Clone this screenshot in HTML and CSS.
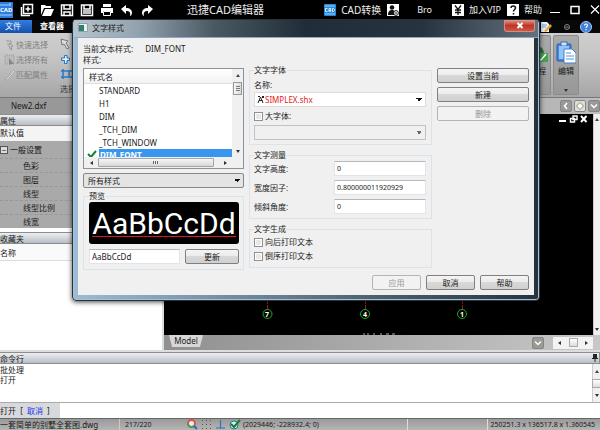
FILE: index.html
```html
<!DOCTYPE html>
<html lang="zh-CN">
<head>
<meta charset="utf-8">
<title>迅捷CAD编辑器</title>
<link rel="stylesheet" href="styles.css">
</head>
<body>
<div class="app">
  <header class="titlebar">
    <svg class="logo" width="13" height="18" viewBox="0 0 13 18"><rect width="13" height="16" y="1" fill="#2b7de0"/><path d="M0 4h9M0 14h12" stroke="#a9d0ff"/><path d="M10 2v3" stroke="#d8eaff"/></svg>
    <span class="logo-text">CAD</span>
    <div class="quick">
      <button aria-label="新建文件"><svg width="14" height="14" viewBox="0 0 14 14"><path d="M3.500 1.500h9v9h-9z" fill="none" stroke="#fff" stroke-width="1.500"/><path d="M1.500 4v8.500H10M8 3.500v5M5.500 6h5" fill="none" stroke="#fff" stroke-width="1.500"/></svg></button>
      <button aria-label="打开"><svg width="14" height="14" viewBox="0 0 14 14"><path d="M1 12V2h4l1 1h5v2H4z" fill="#fff"/><path d="M5 6h9l-3 7H2z" fill="#fff"/></svg></button>
      <button aria-label="保存"><svg width="14" height="14" viewBox="0 0 14 14"><path d="M1.500 2h11v10.500h-11z" fill="none" stroke="#fff" stroke-width="1.500"/><path d="M4 2v4h6V2M4 12V9h6v3" fill="none" stroke="#fff" stroke-width="1.500"/></svg></button>
      <button aria-label="另存为"><svg width="14" height="14" viewBox="0 0 14 14"><path d="M1.500 2h11v10.500h-11z" fill="none" stroke="#fff" stroke-width="1.500"/><path d="M4 2v4h6V2M3 8h8M3 10h8" fill="none" stroke="#fff" stroke-width="1.500"/></svg></button>
      <button aria-label="打印"><svg width="14" height="14" viewBox="0 0 14 14"><path d="M3 1h8v3H3zM1 5h12v5h-2V8H3v2H1z" fill="#fff"/><path d="M3.500 8.500h7v4h-7z" fill="none" stroke="#fff"/></svg></button>
      <button aria-label="撤销"><svg width="14" height="14" viewBox="0 0 14 14"><path d="M1 6l5-4v3c4 0 6 2 6 5 0 1-1 3-2 3 1-4-1-5-4-5v3z" fill="#fff"/></svg></button>
      <button aria-label="重做"><svg width="14" height="14" viewBox="0 0 14 14"><path d="M13 6L8 2v3c-4 0-6 2-6 5 0 1 1 3 2 3-1-4 1-5 4-5v3z" fill="#fff"/></svg></button>
    </div>
    <h1>迅捷CAD编辑器</h1>
    <div class="account">
      <svg width="12" height="12" viewBox="0 0 12 12"><rect width="12" height="12" rx="1" fill="#2788dc"/><path d="M1 2h10M1 10h10" stroke="#9bd0ff"/><path d="M3.500 4.500H1.500v3h2M5 8V4.500h1.700V8M5 6.500h1.500M8.500 4.500v3h1l1-1v-1l-1-1z" fill="none" stroke="#fff" stroke-width=".8"/></svg>
      <span class="convert">CAD转换</span>
      <svg width="12" height="12" viewBox="0 0 12 12"><rect width="12" height="12" fill="#fff"/><circle cx="5" cy="3.500" r="2.300" fill="#111"/><path d="M1 11c0-4 2-5 4-5s3 1 3 5z" fill="#111"/><circle cx="9" cy="9" r="2.400" fill="#fff" stroke="#111"/><path d="M8 9h2" stroke="#111"/></svg>
      <span class="user">Bro</span>
      <svg width="12" height="12" viewBox="0 0 12 12"><rect width="12" height="12" fill="#fff"/><path d="M3 1.500l3 4 3-4M6 5.500V11M3 6h6M3 8.500h6" fill="none" stroke="#111" stroke-width="1.300"/></svg>
      <span class="vip">加入VIP</span>
      <svg width="12" height="12" viewBox="0 0 12 12"><rect width="12" height="12" fill="#fff"/><path d="M4 4c0-3 4.500-2.500 4.500 0C8.500 5.500 6.500 5.500 6.500 7.500M6.500 9v1.500" fill="none" stroke="#111" stroke-width="1.500"/></svg>
      <span>帮助</span>
    </div>
    <div class="window-buttons">
      <button aria-label="最小化"><svg width="10" height="12" viewBox="0 0 10 12"><path d="M0 8.500h10" stroke="#fff"/></svg></button>
      <button aria-label="最大化"><svg width="10" height="12" viewBox="0 0 10 12"><path d="M1 2.500h8v7H1z" fill="none" stroke="#fff" stroke-width="1.500"/></svg></button>
      <button aria-label="关闭"><svg width="10" height="12" viewBox="0 0 10 12"><path d="M1 1.500l8 8M9 1.500l-8 8" stroke="#fff" stroke-width="1.200"/></svg></button>
    </div>
  </header>

  <nav class="menubar">
    <a class="file" href="#">文件</a>
    <a class="viewer" href="#">查看器</a>
    <div class="menu-tools">
      <svg width="14" height="12" viewBox="0 0 14 12"><path d="M1 1h6l2 2v8H1z" fill="#eef4ff"/><path d="M2 4h5M2 6h4" stroke="#68a0dd"/><path d="M4 10l6-7 2 2-6 6z" fill="#e4a63a"/></svg>
      <svg width="8" height="8" viewBox="0 0 8 8"><circle cx="4" cy="4" r="2.500" fill="none" stroke="#888"/><path d="M2.500 5L4 3.500 5.500 5" fill="none" stroke="#999"/></svg>
      <svg width="12" height="12" viewBox="0 0 12 12"><circle cx="6" cy="6" r="5.500" fill="#3f7fdb" stroke="#a8cbf5"/><path d="M4.500 4.500c0-2 3-2 3 0C7.500 5.500 6 5.500 6 7M6 8v1.300" fill="none" stroke="#fff" stroke-width="1.200"/></svg>
    </div>
  </nav>

  <section class="ribbon">
    <div class="selection-tools">
      <ul>
        <li><svg width="12" height="12" viewBox="0 0 12 12"><path d="M2 2h5v3H3M5 4l4 3-2 1 1 3-2-1-1-4" fill="none" stroke="#999"/></svg>快速选择</li>
        <li><svg width="12" height="12" viewBox="0 0 12 12"><path d="M1 1h9v9H1z" fill="#bbb" stroke="#999" stroke-dasharray="1 1"/><path d="M5 4l5 6H7l-2 1z" fill="#888"/></svg>选择所有</li>
        <li><svg width="12" height="12" viewBox="0 0 12 12"><path d="M1 11l5-5 3-5 2 1-3 4-5 5z" fill="#ddd" stroke="#999" stroke-width=".7"/></svg>匹配属性</li>
      </ul>
      <div class="tool-column">
        <svg width="12" height="12" viewBox="0 0 12 12"><path d="M1 1l7 2-2 2 3 5-2 1-3-5-2 1z" fill="#ddd" stroke="#777"/></svg>
        <svg width="12" height="12" viewBox="0 0 12 12"><path d="M4.500 3v2h-3v2.500h3v3H7v-3h2.500V5H7V2.500H4.500z" fill="#dff0ff" stroke="#2474c6"/></svg>
        <svg width="12" height="12" viewBox="0 0 12 12"><path d="M3 1v10M1 3h11M1 9h11M9 3v6" stroke="#2878cc" stroke-width="1.500"/></svg>
        <span>选择</span>
      </div>
    </div>
    <div class="ribbon-actions">
      <button class="big-button"><svg width="20" height="24" viewBox="0 0 20 24"><circle cx="9" cy="12" r="7" fill="#356d47"/><path d="M6 12h14v9H6z" fill="#42a54c"/><path d="M10 17l3 2 5-6" stroke="#fff" fill="none" stroke-width="1.500"/></svg><span>过程</span></button>
      <button class="big-button edit"><svg width="20" height="24" viewBox="0 0 20 24"><rect x="1" y="3" width="14" height="17" rx="1" fill="#4689e0" stroke="#275fae"/><rect x="5" y="1" width="6" height="4" fill="#d3e3f5" stroke="#3a6db5"/><rect x="3" y="5" width="10" height="13" fill="#93c4fb"/><path d="M8 8h8l4 4v10H8z" fill="#fff" stroke="#477fc8"/><path d="M10 12h5M10 15h8M10 18h8" stroke="#4f94e0"/></svg><span>编辑</span><i class="down"></i></button>
    </div>
  </section>

  <div class="doc-tabs">
    <span class="doc-name">New2.dxf</span>
    <div class="tab-nav">
      <button aria-label="上一个"><svg width="8" height="8" viewBox="0 0 8 8"><path d="M5 1L2.500 4 5 7" fill="none" stroke="#fff" stroke-width="1.500"/></svg></button>
      <button class="lit" aria-label="下一个"><svg width="8" height="8" viewBox="0 0 8 8"><path d="M4 .5L7.500 4 4 7.500.5 4z" fill="#fffef0" stroke="#8c8a70"/></svg></button>
      <button aria-label="列表"><svg width="8" height="8" viewBox="0 0 8 8"><path d="M1 2.500l3 3 3-3" fill="none" stroke="#fff" stroke-width="1.500"/></svg></button>
    </div>
  </div>

  <main class="workspace">
    <aside class="side">
      <h2>属性</h2>
      <p class="default-value">默认值</p>
      <h3><span class="minus">−</span>一般设置</h3>
      <ul>
        <li>色彩</li><li>图层</li><li>线型</li><li>线型比例</li><li>线宽</li>
      </ul>
      <h2 class="favorites">收藏夹</h2>
      <p class="column-name">名称</p>
    </aside>
    <section class="drawing">
      <div class="canvas-row">
        <div class="canvas">
          <div class="mdi">
            <svg width="30" height="10" viewBox="0 0 30 10"><path d="M0 7h7" stroke="#fff" stroke-width="2"/><path d="M14 2h4v3.500h-4zM11.500 4.500h4V8h-4z" fill="#000" stroke="#fff" stroke-width="1.400"/><path d="M22 2l5.500 6M27.500 2L22 8" stroke="#fff" stroke-width="2"/></svg>
          </div>
          <svg class="axes" width="220" height="42" viewBox="0 0 220 42">
            <g stroke="#b31317" stroke-dasharray="5 1"><path d="M12.500 0v16M110.500 0v16M207.500 0v16"/></g>
            <g fill="none" stroke="#17ac25"><circle cx="12.500" cy="21" r="4.500"/><circle cx="110" cy="21" r="4.500"/><circle cx="207" cy="21" r="4.500"/></g>
            <g class="axis-label"><text x="12" y="24">7</text><text x="110" y="24">4</text><text x="207" y="24">1</text></g>
            <path d="M108 41h2M112 41h2M118 41h2M125 41h2M131 41h3M137 41h3" stroke="#aaa"/>
          </svg>
        </div>
        <div class="vscroll"><i class="up"></i><i class="down"></i></div>
      </div>
      <div class="model-row">
        <span class="model">Model</span>
        <button class="model-menu" aria-label="布局列表"><svg width="8" height="8" viewBox="0 0 8 8"><path d="M1 2.500l3 3 3-3" fill="none" stroke="#fffde0" stroke-width="1.500"/></svg></button>
        <div class="hscroll"><i class="left"></i><b></b><i class="right"></i></div>
      </div>
    </section>
  </main>

  <section class="command">
    <h2>命令行<svg width="6" height="8" viewBox="0 0 6 8"><path d="M1 0h4v4h1v1H0V4h1zM2.500 5h1v3h-1z" fill="#222"/></svg></h2>
    <div class="log-row">
      <div class="log"><p>批处理</p><p>打开</p></div>
      <div class="vscroll small"><i class="up"></i><b></b><i class="down"></i></div>
    </div>
    <div class="prompt"><label for="cmd">打开&nbsp; [ &nbsp;<a href="#">取消</a>&nbsp; ]</label><input id="cmd" type="text"></div>
  </section>

  <footer class="status">
    <span class="filename">一套简单的别墅全套图.dwg</span>
    <span class="count">217/220</span>
    <span class="toggles">
      <svg width="11" height="11" viewBox="0 0 11 11"><circle cx="4.500" cy="4.500" r="3.500" fill="#eee" stroke="#d8554c" stroke-width="2"/><path d="M1 5a3.500 3.500 0 0 0 6 2" fill="none" stroke="#38a85b" stroke-width="2"/><path d="M7 7l3 3" stroke="#2c67bb" stroke-width="2"/></svg>
      <svg width="11" height="11" viewBox="0 0 11 11"><path d="M1 1.500h10M1 5.500h10M1 9.500h10" stroke="#555" stroke-dasharray="1 3"/></svg>
      <svg width="11" height="11" viewBox="0 0 11 11"><path d="M5.500 1v8M1 9h9" stroke="#2b73bf" stroke-width="1.200"/></svg>
      <svg width="12" height="11" viewBox="0 0 12 11"><circle cx="5" cy="6" r="4" fill="#d7efe1" stroke="#2777a1"/><path d="M2 5l3 3 6-7" fill="none" stroke="#187a32" stroke-width="2"/></svg>
    </span>
    <span class="coords">(2029446; -228932.4; 0)</span>
    <span class="cell"></span>
    <span class="extent">250251.3 x 136517.8 x 1.360545</span>
  </footer>
</div>

<form class="dialog" role="dialog" aria-labelledby="dialog-title">
  <header class="dialog-title">
    <svg width="10" height="9" viewBox="0 0 10 9"><path d="M.5.5h9v8h-9z" fill="#e8f0f2" stroke="#8fa1aa"/><path d="M1 2h5v6H1z" fill="#2f8067"/></svg>
    <span id="dialog-title">文字样式</span>
    <button type="button" class="close" aria-label="关闭"><svg width="8" height="7" viewBox="0 0 8 7"><path d="M1.500 1l5 5M6.500 1l-5 5" stroke="#fff" stroke-width="2"/></svg></button>
  </header>
  <div class="client">
    <div class="current"><span>当前文本样式:</span><span>DIM_FONT</span></div>
    <div class="columns">
      <div class="styles">
        <p class="list-label">样式:</p>
        <div class="listbox">
          <div class="list-main">
            <div class="list-head">样式名</div>
            <ul>
              <li>STANDARD</li><li>H1</li><li>DIM</li><li>_TCH_DIM</li><li>_TCH_WINDOW</li>
              <li class="selected"><svg width="10" height="9" viewBox="0 0 10 9"><path d="M1 5l3 3 5-6" fill="none" stroke="#168038" stroke-width="2"/></svg><span>DIM_FONT</span></li>
            </ul>
            <div class="list-hscroll"><i class="left"></i><b></b><i class="right"></i></div>
          </div>
          <div class="list-vscroll"><i class="up"></i><b></b><i class="down"></i></div>
        </div>
        <select class="filter" aria-label="样式过滤"><option>所有样式</option></select>
        <fieldset class="preview">
          <legend>预览</legend>
          <div class="sample"><span>AaBbCcDd</span></div>
          <div class="preview-row">
            <input type="text" aria-label="预览文本" value="AaBbCcDd">
            <button type="button">更新</button>
          </div>
        </fieldset>
      </div>

      <div class="settings">
        <fieldset class="font-group">
          <legend>文字字体</legend>
          <label class="name" for="font">名称:</label>
          <div class="font-select">
            <svg width="8" height="9" viewBox="0 0 8 9"><path d="M1 8l2.500-6L6 8M2 5.500h3.500M1 1.500h2M5 1l2 2M5 3l2-2" fill="none" stroke="#222"/></svg>
            <select id="font"><option>SIMPLEX.shx</option></select>
          </div>
          <label class="check"><input type="checkbox">大字体:</label>
          <select class="big-font" aria-label="大字体" disabled><option></option></select>
        </fieldset>
        <fieldset class="measure">
          <legend>文字测量</legend>
          <label for="h">文字高度:</label><input id="h" type="text" value="0">
          <label for="w">宽度因子:</label><input id="w" type="text" value="0.800000011920929">
          <label for="a">倾斜角度:</label><input id="a" type="text" value="0">
        </fieldset>
        <fieldset class="generate">
          <legend>文字生成</legend>
          <label class="check"><input type="checkbox">向后打印文本</label>
          <label class="check"><input type="checkbox">倒序打印文本</label>
        </fieldset>
      </div>

      <div class="side-buttons">
        <button type="button">设置当前</button>
        <button type="button">新建</button>
        <button type="button" disabled>删除</button>
      </div>
    </div>
    <div class="dialog-actions">
      <button type="button" disabled>应用</button>
      <button type="button">取消</button>
      <button type="button">帮助</button>
    </div>
  </div>
</form>
</body>
</html>
```
FILE: styles.css
```css
* { box-sizing: border-box; }
body {
  margin: 0;
  background: #000;
  color: #1a1a1a;
  font: 8px/12px "Noto Sans", "Noto Sans CJK SC", sans-serif;
}
h1, h2, h3, p, ul { margin: 0; padding: 0; font-size: inherit; font-weight: normal; list-style: none; }
button, input, select { margin: 0; font: inherit; color: inherit; }
button { padding: 0; cursor: pointer; }
a { color: inherit; text-decoration: none; }
svg { display: block; flex: none; }
i { flex: none; width: 0; height: 0; border: 2px solid transparent; }
i.up { border-top: 0; border-bottom: 3px solid #444; }
i.down { border-bottom: 0; border-top: 3px solid #333; }
i.left { border-left: 0; border-right: 3px solid #333; }
i.right { border-right: 0; border-left: 3px solid #333; }

.app { display: flex; flex-direction: column; height: 100vh; overflow: hidden; }

/* Title bar */
.titlebar { position: relative; display: flex; align-items: center; flex: none; height: 20px; background: #000; color: #eee; font-size: 9px; }
.titlebar button { display: flex; background: none; border: 0; }
.logo-text { position: absolute; left: 0; top: 4px; font-size: 6px; font-weight: bold; color: #fff; }
.quick { display: flex; gap: 6px; margin-left: 7px; }
.titlebar h1 { margin-left: 33px; font-size: 11px; }
.account { display: flex; align-items: center; margin-left: auto; white-space: nowrap; }
.account span { margin-left: 5px; }
.account .convert { margin-right: 6px; font-size: 10px; }
.account .user { margin: 0 20px 0 18px; }
.account .vip { margin-right: 6px; }
.window-buttons { display: flex; gap: 10px; margin-left: 8px; }

/* Menu bar and ribbon */
.menubar { display: flex; flex: none; height: 13px; background: #080808; color: #fff; }
.menubar a { padding: 0 8px; }
.menubar .file { background: linear-gradient(#2e7fdc, #164fb0); width: 32px; padding: 0 5px; }
.menubar .viewer { font-weight: bold; }
.menu-tools { display: flex; align-items: center; gap: 9px; margin-left: auto; margin-right: 8px; }
.ribbon { display: flex; justify-content: space-between; flex: none; height: 64px; background: linear-gradient(#cfcfcf, #c4c4c4 40%, #a6a6a6); }
.selection-tools { display: flex; gap: 12px; padding: 4px 0 0 4px; color: #808080; }
.selection-tools li { display: flex; align-items: center; height: 15px; }
.tool-column { display: flex; flex-direction: column; gap: 3px; padding-top: 1px; color: #333; }
.ribbon-actions { display: flex; gap: 2px; padding: 2px 21px 2px 0; }
.big-button { display: flex; flex-direction: column; align-items: center; width: 26px; padding-top: 5px; border: 1px solid #8b8b8b; border-radius: 2px; background: linear-gradient(#aaa, #989898); }
.big-button i { margin-top: 12px; }

.doc-tabs { display: flex; align-items: center; flex: none; height: 17px; padding-left: 11px; background: linear-gradient(90deg, #999, #959595 60%, #bfbfbf); border-top: 1px solid #777; }
.tab-nav { display: flex; gap: 2px; margin-left: auto; }
.tab-nav button, .model-menu { display: grid; place-items: center; width: 12px; height: 12px; border: 1px solid #858585; border-radius: 2px; background: #999; }
.tab-nav .lit { background: #ddd; }

/* Workspace */
.workspace { display: grid; grid-template-columns: 162px 1fr; gap: 2px; flex: 1; min-height: 0; background: #ddd; }
.side { background: #fff; }
.side h2, .command h2 { height: 12px; line-height: 11px; background: linear-gradient(#eceef1, #b9bec6); border: 1px solid #8d8d8d; border-left: 0; }
.default-value { height: 15px; line-height: 14px; background: #f4f4f4; }
.side h3 { display: flex; align-items: center; gap: 2px; height: 17px; background: #a9a9a9; }
.minus { display: grid; place-items: center; width: 8px; height: 8px; border: 1px solid #555; background: #ddd; line-height: 6px; }
.side li { height: 14px; padding-left: 23px; background: #a9a9a9; border-top: 1px dashed #979797; line-height: 13px; }
.side .favorites { margin-top: 4px; }
.column-name { height: 17px; line-height: 17px; border-bottom: 1px solid #ddd; background: #fafafa; }
.drawing { display: flex; flex-direction: column; min-width: 0; }
.canvas-row { display: flex; flex: 1; min-height: 0; }
.canvas { display: flex; flex-direction: column; justify-content: space-between; flex: 1; background: #000; padding: 0 4px 0 91px; }
.mdi { align-self: flex-end; }
.axis-label { fill: #fff; font: bold 7px "Noto Sans", sans-serif; text-anchor: middle; }
.vscroll { display: flex; flex-direction: column; align-items: center; justify-content: space-between; width: 7px; padding: 4px 0; background: #f0f0f0; border-left: 1px solid #ccc; }
.model-row { display: flex; align-items: center; flex: none; height: 15px; padding-left: 5px; background: linear-gradient(90deg, #909090, #c8c8c8); }
.model { align-self: flex-start; width: 34px; height: 12px; background: #d7d7d7; clip-path: polygon(0 0, 100% 0, 91% 100%, 9% 100%); text-align: center; line-height: 11px; }
.model-menu { margin-left: auto; padding: 0; }
.hscroll { display: flex; align-items: center; justify-content: space-between; width: 40px; height: 12px; margin: 0 7px 0 9px; padding: 0 5px; background: #f3f3f3; }
.hscroll b, .vscroll b { width: 9px; height: 9px; border: 1px solid #aaa; background: linear-gradient(#fff, #ddd); }

/* Command line */
.command { flex: none; padding-top: 2px; background: #ddd; }
.command h2 { display: flex; align-items: center; justify-content: space-between; padding-right: 1px; }
.log-row { display: flex; height: 39px; background: #fff; border-bottom: 1px solid #aaa; }
.log { flex: 1; padding-top: 1px; }
.log p { line-height: 10px; }
.vscroll.small { width: 8px; padding: 6px 0 5px; }
.prompt { display: flex; height: 15px; line-height: 15px; background: #fff; }
.prompt label { width: 60px; background: #d8d9dd; white-space: nowrap; }
.prompt a { color: #2430e8; }
.prompt input { flex: 1; min-width: 0; }

.status { display: flex; align-items: center; flex: none; height: 12px; background: linear-gradient(#9a9a9a, #b5b5b5); border-top: 1px solid #666; font-size: 7px; line-height: 11px; white-space: nowrap; }
.filename { width: 119px; font-size: 8px; }
.count { width: 68px; padding-left: 5px; border-left: 1px solid #ccc; }
.toggles { display: flex; gap: 3px; width: 56px; }
.coords { flex: 1; }
.cell { width: 80px; border-left: 1px solid #ddd; height: 11px; }
.extent { padding: 0 5px 0 3px; border-left: 1px solid #ddd; }

/* Text style dialog */
.dialog { position: absolute; left: 72px; right: 60px; top: 19px; padding: 0 5px 5px; border: 1px solid #26333d; border-radius: 4px; background: linear-gradient(90deg, #9ebbd5, #526776 60%, #26333d); box-shadow: inset 0 0 0 1px #a8c0d3, 0 1px 5px #000b; }
.dialog-title { display: flex; align-items: center; gap: 4px; height: 18px; margin: 0 -4px; padding: 0 0 2px 4px; border-bottom: 1px solid #8fa9c4; background: linear-gradient(90deg, #b7c3cc, #92a2ad 14%, #4a5962 30%, #202d38 50%, #27343f 75%, #64717c); }
.close { display: grid; place-items: center; align-self: flex-start; width: 31px; height: 12px; margin-left: auto; margin-right: 3px; border: 1px solid #d78b80; border-top: 0; border-radius: 0 0 3px 3px; background: linear-gradient(#df9b8e, #bd3524 50%, #cc5746); }
.client { padding: 5px; background: #f0f0f0; }
.current { display: flex; gap: 12px; line-height: 11px; }
.columns { display: grid; grid-template-columns: 161px 1fr 92px; gap: 5px; }
.list-label { height: 14px; line-height: 11px; }
.listbox { display: flex; height: 101px; border: 1px solid #8c939b; background: #fff; }
.list-main { display: flex; flex-direction: column; flex: 1; min-width: 0; }
.list-head { flex: none; height: 15px; padding-left: 5px; line-height: 15px; background: linear-gradient(#fff, #f2f2f2); border-bottom: 1px solid #e0e0e0; }
.listbox ul { flex: 1; min-height: 0; overflow: hidden; }
.listbox li { height: 13px; padding-left: 15px; line-height: 13px; }
.listbox .selected { display: flex; gap: 2px; padding-left: 3px; }
.selected span { flex: 1; padding-left: 1px; background: #3797ee; color: #fff; font-weight: bold; line-height: 12px; }
.list-hscroll { display: flex; align-items: center; gap: 5px; flex: none; height: 11px; padding-left: 6px; background: #f0f0f0; }
.list-hscroll b { width: 116px; height: 9px; border: 1px solid #a5a5a5; border-radius: 1px; background: repeating-linear-gradient(90deg, #666 0 1px, #eee 1px 2px) center / 6px 3px no-repeat, linear-gradient(#f6f6f6, #d8d8d8); }
.list-hscroll .right { margin-left: 5px; }
.list-vscroll { display: flex; flex-direction: column; align-items: center; width: 11px; padding: 5px 0 15px; background: #f0f0f0; }
.list-vscroll b { width: 9px; height: 13px; margin-top: 5px; border: 1px solid #999; background: repeating-linear-gradient(#777 0 1px, #eee 1px 2px) center / 4px 6px no-repeat, linear-gradient(90deg, #f6f6f6, #d8d8d8); }
.list-vscroll .down { margin-top: auto; }
select {
  appearance: none;
  width: 100%;
  height: 15px;
  padding: 0 4px;
  border: 1px solid #a5a5a5;
  border-radius: 0;
  line-height: 12px;
  background-color: #fff;
  background-image: linear-gradient(to top right, transparent 50%, #111 50%), linear-gradient(to top left, transparent 50%, #111 50%);
  background-repeat: no-repeat;
  background-size: 3px 3px;
  background-position: right 6px center, right 3px center;
}
select:disabled { opacity: .6; }
.filter { display: block; margin-top: 4px; background-color: #e4e4e4; border-color: #888; border-radius: 2px; }
fieldset { min-width: 0; margin: 0; border: 1px solid #dce3e8; }
legend { padding: 0; line-height: 12px; }
.preview { margin-top: 2px; padding: 0 4px 5px 5px; }
.sample { display: flex; justify-content: center; height: 42px; border-radius: 3px; background: #000; color: #fff; font: 30px/44px Roboto, "Liberation Sans", sans-serif; }
.sample span { height: 35px; border-bottom: 1px solid #e01818; }
.preview-row { display: flex; gap: 5px; margin-top: 5px; }
.preview-row input { flex: 1; min-width: 0; }
.preview-row button { width: 54px; }
input[type="text"] { height: 15px; padding: 0 2px; border: 1px solid #e2e4e8; border-top-color: #b4b7bd; background: #fff; }
.prompt input[type="text"] { border: 0; }
.client button { height: 15px; border: 1px solid #808080; border-radius: 2px; background: linear-gradient(#f4f4f4, #ebebeb 50%, #d8d8d8 50%, #d0d0d0); line-height: 12px; }
.client button:disabled { border-color: #b4b4b4; background: #f2f2f2; color: #969696; }
.settings { display: flex; flex-direction: column; gap: 4px; margin-top: 10px; }
.settings fieldset { padding: 0 5px 4px 4px; }
.font-group .name { display: block; margin-top: 3px; }
.font-select { display: flex; align-items: center; margin: 1px 0 2px; padding-left: 2px; border: 1px solid #dcdcdc; background: #fff; }
.font-select select { height: 13px; border: 0; padding: 0; color: #e82020; }
.settings .check { display: flex; align-items: center; gap: 2px; height: 14px; }
.check input { appearance: none; width: 9px; height: 9px; border: 1px solid #8d9299; background: #e8e8e8; box-shadow: inset 0 0 0 1px #fff; }
.big-font { display: block; margin-top: 2px; background-color: #f0f0f0; }
.measure { display: grid; grid-template-columns: 80px 1fr; row-gap: 4px; align-items: center; }
.measure input { width: 100%; font-size: 7px; }
.side-buttons { display: flex; flex-direction: column; gap: 4px; margin-top: 14px; }
.dialog-actions { display: flex; justify-content: flex-end; gap: 5px; margin-top: 5px; }
.dialog-actions button { width: 49px; }
```
